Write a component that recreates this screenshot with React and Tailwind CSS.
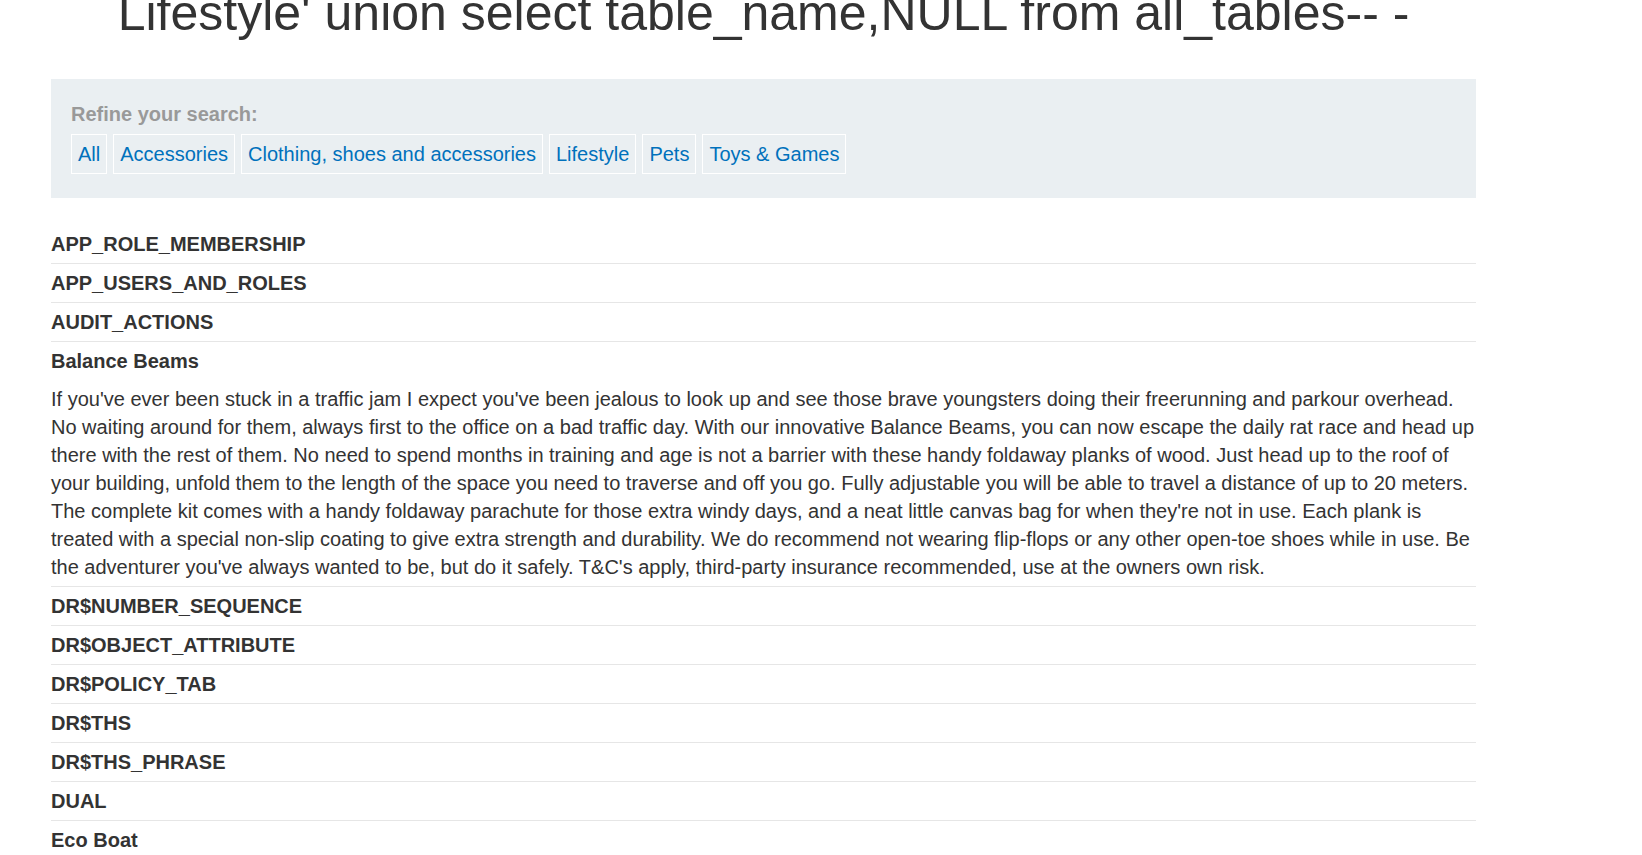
import React from "react";

const categories = [
  "All",
  "Accessories",
  "Clothing, shoes and accessories",
  "Lifestyle",
  "Pets",
  "Toys & Games",
];

// rows returned by the injected query
const rows = [
  { name: "APP_ROLE_MEMBERSHIP" },
  { name: "APP_USERS_AND_ROLES" },
  { name: "AUDIT_ACTIONS" },
  {
    name: "Balance Beams",
    text: "If you've ever been stuck in a traffic jam I expect you've been jealous to look up and see those brave youngsters doing their freerunning and parkour overhead. No waiting around for them, always first to the office on a bad traffic day. With our innovative Balance Beams, you can now escape the daily rat race and head up there with the rest of them. No need to spend months in training and age is not a barrier with these handy foldaway planks of wood. Just head up to the roof of your building, unfold them to the length of the space you need to traverse and off you go. Fully adjustable you will be able to travel a distance of up to 20 meters. The complete kit comes with a handy foldaway parachute for those extra windy days, and a neat little canvas bag for when they're not in use. Each plank is treated with a special non-slip coating to give extra strength and durability. We do recommend not wearing flip-flops or any other open-toe shoes while in use. Be the adventurer you've always wanted to be, but do it safely. T&C's apply, third-party insurance recommended, use at the owners own risk.",
  },
  { name: "DR$NUMBER_SEQUENCE" },
  { name: "DR$OBJECT_ATTRIBUTE" },
  { name: "DR$POLICY_TAB" },
  { name: "DR$THS" },
  { name: "DR$THS_PHRASE" },
  { name: "DUAL" },
  { name: "Eco Boat" },
];

function App() {
  return (
    <div className="min-h-screen bg-white font-['Liberation_Sans',Arial,sans-serif] text-[#333] overflow-hidden">
      <div className="ml-[51px] w-[1425px]">
        <h1 className="mt-[-15px] text-center text-[50px] leading-[56px] font-normal text-[#333] whitespace-nowrap">
          Lifestyle' union select table_name,NULL from all_tables-- -
        </h1>

        {/* Refine box */}
        <div className="mt-[38px] bg-[#eaeff2] pl-[20px] pr-[20px] pt-[21px] pb-[24px]">
          <div className="text-[20px] leading-[28px] font-bold text-[#999]">
            Refine your search:
          </div>
          <div className="mt-[6px] flex gap-[6px]">
            {categories.map((c) => (
              <a
                key={c}
                href="#"
                className="border border-white px-[6px] py-[5px] text-[20px] leading-[28px] text-[#0071bc]"
              >
                {c}
              </a>
            ))}
          </div>
        </div>

        {/* Results */}
        <div className="mt-[27px]">
          {rows.map((r) => (
            <div key={r.name} className="border-b border-[#e6e6e6]">
              <div className="py-[5px] text-[20px] leading-[28px] font-bold">
                {r.name}
              </div>
              {r.text && (
                <div className="py-[5px] text-[20px] leading-[28px]">
                  {r.text}
                </div>
              )}
            </div>
          ))}
        </div>
      </div>
    </div>
  );
}

export default App;
